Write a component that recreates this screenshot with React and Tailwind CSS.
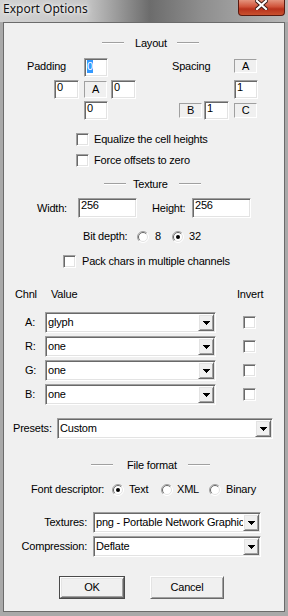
import React from 'react';

// classic win32 3D edges
const sunken =
  'border border-t-[#a0a0a0] border-l-[#a0a0a0] border-b-white border-r-white shadow-[inset_1px_1px_0_#696969,inset_-1px_-1px_0_#e3e3e3]';
const raised =
  'border border-t-white border-l-white border-b-[#696969] border-r-[#696969] shadow-[inset_1px_1px_0_#e3e3e3,inset_-1px_-1px_0_#a0a0a0]';

const Edit = ({ className = '', children }) => (
  <div className={`${sunken} bg-white h-[19px] flex items-start pl-[2px] leading-[13px] ${className}`}>
    {children}
  </div>
);

const Static = ({ className = '', children }) => (
  <div className={`border border-t-[#a0a0a0] border-l-[#a0a0a0] border-b-white border-r-white flex items-center justify-center ${className}`}>
    {children}
  </div>
);

const Check = ({ className = '' }) => (
  <div className={`${sunken} bg-white w-[13px] h-[13px] shrink-0 ${className}`} />
);

const Radio = ({ checked }) => (
  <svg width="12" height="12" viewBox="0 0 12 12" className="shrink-0">
    <circle cx="6" cy="6" r="5.5" fill="#fff" />
    <path d="M2.1 9.9 A5.5 5.5 0 0 1 9.9 2.1" stroke="#a0a0a0" fill="none" />
    <path d="M9.9 2.1 A5.5 5.5 0 0 1 2.1 9.9" stroke="#ffffff" fill="none" />
    <path d="M2.8 9.2 A4.5 4.5 0 0 1 9.2 2.8" stroke="#696969" fill="none" />
    <path d="M9.2 2.8 A4.5 4.5 0 0 1 2.8 9.2" stroke="#e3e3e3" fill="none" />
    {checked && <circle cx="6" cy="6" r="2" fill="#000" />}
  </svg>
);

const Combo = ({ className = '', value }) => (
  <div className={`${sunken} bg-white h-[21px] p-[1px] flex ${className}`}>
    <div className="flex-1 min-w-0 overflow-hidden whitespace-nowrap pl-[1px] flex items-center">{value}</div>
    <div className={`${raised} bg-[#f0f0f0] w-[16px] shrink-0 flex items-center justify-center`}>
      <svg width="7" height="4" viewBox="0 0 7 4" shapeRendering="crispEdges">
        <path d="M0 0h7v1h-1v1h-1v1h-1v1h-1v-1h-1v-1h-1v-1h-1z" fill="#000" />
      </svg>
    </div>
  </div>
);

const Etched = () => <div className="w-[22px] h-[2px] border-t border-t-[#a0a0a0] border-b border-b-white" />;

const Heading = ({ className = '', gapA, gapB, children }) => (
  <div className={`flex items-center h-[14px] ${className}`}>
    <Etched />
    <div className={gapA}>{children}</div>
    <div className={gapB}>
      <Etched />
    </div>
  </div>
);

export default function App() {
  const channels = [
    ['A:', 'glyph'],
    ['R:', 'one'],
    ['G:', 'one'],
    ['B:', 'one'],
  ];

  return (
    <div className="w-[288px] h-[616px] bg-[#a9a9a9] flex flex-col overflow-hidden">
      {/* title bar */}
      <div className="h-[22px] flex items-start bg-[linear-gradient(90deg,#d2d2d2_0%,#c6c6c6_30%,#6c6c6c_52%,#8e8e8e_70%,#b8b8b8_100%)]">
        <div className="pl-[3px] pt-[1px] text-[12px] leading-[16px] text-[#111] font-['Noto_Sans',sans-serif] [text-shadow:0_0_6px_#fff,0_0_3px_#fff]">
          Export Options
        </div>
        <div className="ml-auto mr-[3px] w-[47px] h-[16px] rounded-b-[4px] border border-t-0 border-[#5a1a10] bg-[linear-gradient(180deg,#e4937d_0%,#d0533a_45%,#b8321c_60%,#c9512f_100%)] flex items-start justify-center">
          <svg width="13" height="10" viewBox="0 0 13 10" className="mt-[0px]">
            <path d="M2 1 L11 9 M11 1 L2 9" stroke="#3a1a14" strokeWidth="4" strokeLinecap="square" />
            <path d="M2 1 L11 9 M11 1 L2 9" stroke="#ffffff" strokeWidth="2.2" strokeLinecap="square" />
          </svg>
        </div>
      </div>

      {/* client area */}
      <div className="mx-[3px] h-[590px] border border-[#6b6b6b] bg-[#f0f0f0] flex flex-col text-[11px] leading-[13px] tracking-[-0.2px] text-black font-['Liberation_Sans',Arial,sans-serif]">
        <Heading className="mt-[13px] ml-[98px]" gapA="ml-[11px]" gapB="ml-[10px]">Layout</Heading>

        {/* padding / spacing */}
        <div className="flex mt-[8px] h-[19px]">
          <div className="ml-[23px] w-[57px] pt-[2px]">Padding</div>
          <Edit className="w-[24px]">
            <span className="mt-[1px] bg-[#3399ff] text-white">0</span>
          </Edit>
          <div className="ml-[64px] w-[62px] pt-[2px]">Spacing</div>
          <Static className="w-[23px] h-[14px] mt-[1px]">A</Static>
        </div>
        <div className="flex mt-[3px] h-[19px]">
          <Edit className="ml-[50px] w-[25px]">0</Edit>
          <Static className="ml-[5px] w-[23px] h-[17px] mt-[1px]">A</Static>
          <Edit className="ml-[4px] w-[25px]">0</Edit>
          <Edit className="ml-[98px] w-[24px]">1</Edit>
        </div>
        <div className="flex mt-[2px] h-[19px]">
          <Edit className="ml-[80px] w-[24px]">0</Edit>
          <Static className="ml-[71px] w-[23px] h-[15px] mt-[2px]">B</Static>
          <Edit className="ml-[2px] w-[25px]">1</Edit>
          <Static className="ml-[5px] w-[23px] h-[15px] mt-[2px]">C</Static>
        </div>

        <div className="flex items-center mt-[13px] h-[13px]">
          <Check className="ml-[72px]" />
          <div className="ml-[5px]">Equalize the cell heights</div>
        </div>
        <div className="flex items-center mt-[8px] h-[13px]">
          <Check className="ml-[72px]" />
          <div className="ml-[5px]">Force offsets to zero</div>
        </div>

        <Heading className="mt-[10px] ml-[100px]" gapA="ml-[7px]" gapB="ml-[11px]">Texture</Heading>

        <div className="flex items-center mt-[7px] h-[20px]">
          <div className="ml-[33px] w-[41px]">Width:</div>
          <Edit className="w-[59px] !h-[20px]">256</Edit>
          <div className="ml-[15px] w-[40px]">Height:</div>
          <Edit className="w-[59px] !h-[20px]">256</Edit>
        </div>

        <div className="flex items-center mt-[12px] h-[13px]">
          <div className="ml-[79px] w-[54px]">Bit depth:</div>
          <Radio />
          <div className="ml-[6px] w-[11px]">8</div>
          <div className="ml-[6px]">
            <Radio checked />
          </div>
          <div className="ml-[5px]">32</div>
        </div>

        <div className="flex items-center mt-[12px] h-[13px]">
          <Check className="ml-[59px]" />
          <div className="ml-[6px]">Pack chars in multiple channels</div>
        </div>

        <div className="flex items-center mt-[19px] h-[14px]">
          <div className="ml-[11px] w-[36px]">Chnl</div>
          <div className="w-[186px]">Value</div>
          <div>Invert</div>
        </div>

        {channels.map(([ch, val], i) => (
          <div key={ch} className={`flex items-center h-[21px] ${i === 0 ? 'mt-[11px]' : 'mt-[3px]'}`}>
            <div className="ml-[21px] w-[20px]">{ch}</div>
            <Combo className="w-[171px]" value={val} />
            <Check className="ml-[27px]" />
          </div>
        ))}

        <div className="flex items-center mt-[13px] h-[21px]">
          <div className="ml-[9px] w-[44px]">Presets:</div>
          <Combo className="w-[216px]" value="Custom" />
        </div>

        <Heading className="mt-[19px] ml-[87px]" gapA="ml-[14px]" gapB="ml-[11px]">File format</Heading>

        <div className="flex items-center mt-[11px] h-[13px]">
          <div className="ml-[27px] w-[81px]">Font descriptor:</div>
          <Radio checked />
          <div className="ml-[5px] w-[32px]">Text</div>
          <Radio />
          <div className="ml-[4px] w-[32px]">XML</div>
          <Radio />
          <div className="ml-[5px]">Binary</div>
        </div>

        <div className="flex items-center mt-[16px] h-[21px]">
          <div className="w-[83px] text-right">Textures:</div>
          <Combo className="ml-[6px] w-[168px]" value="png - Portable Network Graphics" />
        </div>
        <div className="flex items-center mt-[3px] h-[21px]">
          <div className="w-[83px] text-right">Compression:</div>
          <Combo className="ml-[6px] w-[168px]" value="Deflate" />
        </div>

        <div className="flex mt-[19px] h-[23px]">
          <div className="ml-[55px] w-[66px] border border-[#4a4a4a] flex">
            <div className={`${raised} bg-[#f0f0f0] flex-1 flex items-center justify-center`}>OK</div>
          </div>
          <div className={`${raised} ml-[25px] w-[74px] bg-[#f0f0f0] flex items-center justify-center`}>Cancel</div>
        </div>
      </div>
    </div>
  );
}
